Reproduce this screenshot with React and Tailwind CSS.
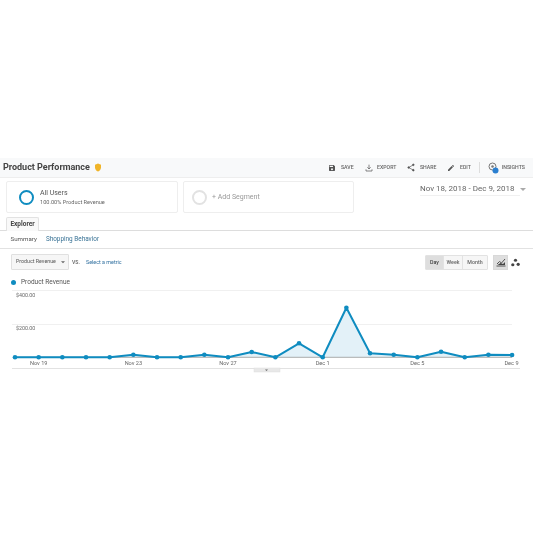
const F = "font-['Roboto',sans-serif]";

function Save() {
  return <svg width="8" height="8" viewBox="0 0 24 24" fill="#555"><path d="M17 3H5a2 2 0 0 0-2 2v14a2 2 0 0 0 2 2h14a2 2 0 0 0 2-2V7l-4-4zm-5 16a3 3 0 1 1 0-6 3 3 0 0 1 0 6zm3-10H5V5h10v4z" /></svg>;
}
function Export() {
  return <svg width="8" height="8" viewBox="0 0 24 24" fill="none" stroke="#666" strokeWidth="2.4"><path d="M12 2v13M7 10l5 5 5-5M3 16v5h18v-5" /></svg>;
}
function Share() {
  return <svg width="8" height="9" viewBox="0 0 24 24" fill="#555" stroke="#555" strokeWidth="2"><circle cx="19" cy="4" r="2.5" /><circle cx="19" cy="20" r="2.5" /><circle cx="5" cy="12" r="2.5" /><path d="M19 4 5 12l14 8" fill="none" /></svg>;
}
function Edit() {
  return <svg width="8" height="8" viewBox="0 0 24 24" fill="#555"><path d="M3 17.25V21h3.75L17.81 9.94l-3.75-3.75L3 17.25zM20.71 7.04a1 1 0 0 0 0-1.41l-2.34-2.34a1 1 0 0 0-1.41 0l-1.83 1.83 3.75 3.75 1.83-1.83z" /></svg>;
}
function Insights() {
  return <svg width="11" height="12" viewBox="0 0 22 24"><circle cx="9" cy="9" r="7" fill="none" stroke="#777" strokeWidth="2" /><circle cx="9" cy="9" r="2.5" fill="#777" /><circle cx="15" cy="17" r="6" fill="#2a7fd0" /></svg>;
}

function Action({ icon, label, className }) {
  return (
    <div className={`flex items-center gap-[4.5px] ${className}`}>
      {icon}
      <span className="text-[5.2px] font-medium text-[#666]">{label}</span>
    </div>
  );
}

const pts = [0,0,0,0,0,2.6,0,0,2.6,0,5.3,0,14,0,49.6,4,2.6,0,5.6,0,2.6,2.3];
const BASE = 68.3;
const coords = pts.map((v, i) => [15 + i * 23.67, BASE - v]);
const line = coords.map((c) => c.join(",")).join(" ");
const area = `15,${BASE} ${line} 512,${BASE}`;
const xLabels = [["Nov 19", 38.7], ["Nov 23", 133.4], ["Nov 27", 228], ["Dec 1", 322.7], ["Dec 5", 417.4], ["Dec 9", 511.5]];

function Chart() {
  return (
    <svg width="535" height="87" viewBox="0 0 535 87" className="block" fontFamily="Roboto, sans-serif">
      <line x1="12" x2="512" y1="1.5" y2="1.5" stroke="#f0f0f0" strokeWidth="1" />
      <line x1="12" x2="512" y1="35.5" y2="35.5" stroke="#f0f0f0" strokeWidth="1" />
      <text x="16" y="8" fontSize="5.3" fill="#666">$400.00</text>
      <text x="16" y="41" fontSize="5.3" fill="#666">$200.00</text>
      <polygon points={area} fill="#e3f1f8" />
      <line x1="15" x2="512" y1={BASE} y2={BASE} stroke="#888" strokeWidth="0.7" />
      <polyline points={line} fill="none" stroke="#0f8cc0" strokeWidth="2" strokeLinejoin="round" />
      {coords.map((c, i) => <circle key={i} cx={c[0]} cy={c[1]} r="2.3" fill="#0f8cc0" />)}
      {xLabels.map(([t, x]) => <text key={t} x={x} y="76" fontSize="5.6" fill="#666" textAnchor="middle">{t}</text>)}
      <line x1="12" x2="520" y1="79.5" y2="79.5" stroke="#e2e2e2" strokeWidth="1" />
      <rect x="254" y="79" width="26" height="4" fill="#e8e8e8" stroke="#ddd" strokeWidth="0.5" />
      <path d="M265 80.5h3l-1.5 1.5z" fill="#666" />
    </svg>
  );
}

export default function App() {
  return (
    <div className={`w-[535px] h-[535px] bg-white pt-[158px] overflow-hidden blur-[0.5px] ${F}`}>
      <div className="w-[533px]">
        {/* title bar */}
        <div className="h-[19px] bg-[#f8f9fa] flex items-center pl-[3px] pr-[8px]">
          <span className="text-[9px] font-bold text-[#444] leading-none">Product Performance</span>
          <svg width="8" height="9" viewBox="0 0 24 26" className="ml-[4px]"><path d="M12 1 3 5v7c0 6 4 11 9 13 5-2 9-7 9-13V5z" fill="#f0b429" /></svg>
          <div className="ml-auto flex items-center">
            <Action icon={<Save />} label="SAVE" />
            <Action icon={<Export />} label="EXPORT" className="ml-[11px]" />
            <Action icon={<Share />} label="SHARE" className="ml-[11px]" />
            <Action icon={<Edit />} label="EDIT" className="ml-[11px]" />
            <div className="w-px h-[11px] bg-[#ddd] mx-[8px]" />
            <div className="flex items-center gap-[3px]">
              <Insights />
              <span className="text-[5.2px] font-medium text-[#666]">INSIGHTS</span>
            </div>
          </div>
        </div>

        {/* segments */}
        <div className="h-[40px] border-t border-[#eee] pt-[3px] pl-[6px] flex items-start">
          <div className="w-[172px] h-[32px] shrink-0 border border-[#eee] rounded-[2px] flex items-center pl-[12px]">
            <div className="w-[15px] h-[15px] rounded-full border-[2.5px] border-[#0f8cc0]" />
            <div className="ml-[6px] flex flex-col">
              <span className="text-[7px] leading-[10px] text-[#555]">All Users</span>
              <span className="text-[5.6px] leading-[8px] text-[#666]">100.00% Product Revenue</span>
            </div>
          </div>
          <div className="ml-[5px] w-[171px] h-[32px] shrink-0 border border-[#eee] rounded-[2px] flex items-center pl-[8px]">
            <div className="w-[15px] h-[15px] rounded-full border-[2px] border-[#e2e2e2]" />
            <span className="ml-[5px] text-[7px] text-[#999]">+ Add Segment</span>
          </div>
          <div className="ml-[66px] mt-[2px] flex items-center shrink-0">
            <span className="text-[8px] leading-[12px] text-[#666] border-b border-[#f0f0f0] pr-[5px] whitespace-nowrap">Nov 18, 2018 - Dec 9, 2018</span>
            <svg width="6" height="4" viewBox="0 0 6 4"><path d="M0 0h6L3 3z" fill="#aaa" /></svg>
          </div>
        </div>

        {/* tab */}
        <div className="h-[14px] pl-[6px] border-b border-[#ddd] flex">
          <div className="w-[33px] h-[14px] bg-[#f9f9f9] border border-b-0 border-[#e2e2e2] rounded-t-[2px] flex items-center justify-center text-[6.5px] font-bold text-[#444]">Explorer</div>
        </div>

        {/* sub nav */}
        <div className="h-[18px] border-b border-[#e2e2e2] flex items-center pl-[10.5px] pt-[1px]">
          <span className="text-[6.2px] text-[#555]">Summary</span>
          <span className="ml-[9px] text-[6.4px] text-[#3a7396]">Shopping Behavior</span>
        </div>

        {/* controls */}
        <div className="h-[21px] flex items-end pl-[11px] pr-[11px]">
          <div className="w-[58px] h-[16px] bg-[#f6f6f6] border border-[#e0e0e0] rounded-[1px] flex items-center pl-[4px] text-[5.3px] text-[#555]">
            <span>Product Revenue</span>
            <svg width="4" height="3" viewBox="0 0 6 4" className="ml-[5px]"><path d="M0 0h6L3 3z" fill="#666" /></svg>
          </div>
          <span className="ml-[3px] mb-[5px] text-[5.2px] text-[#666] font-medium leading-none">VS.</span>
          <span className="ml-[6px] mb-[5px] text-[5.4px] text-[#2f6f9f] leading-none">Select a metric</span>
          <div className="ml-auto flex h-[15px] border border-[#e2e2e2] rounded-[1px] text-[5.3px] font-medium text-[#666]">
            <div className="w-[17px] bg-[#dedede] flex items-center justify-center text-[#444]">Day</div>
            <div className="w-[20px] bg-[#f6f6f6] border-x border-[#e2e2e2] flex items-center justify-center">Week</div>
            <div className="w-[24px] bg-[#f6f6f6] flex items-center justify-center">Month</div>
          </div>
          <div className="ml-[5px] flex h-[15px]">
            <div className="w-[15px] bg-[#dedede] border border-[#d8d8d8] flex items-center justify-center">
              <svg width="10" height="9" viewBox="0 0 20 18" fill="none" stroke="#444" strokeWidth="1.8"><path d="M1 16h18M2 12l5-5 4 3 7-8" /><path d="M3 14l6-4 5 2 4-4v6z" fill="#444" stroke="none" /></svg>
            </div>
            <div className="w-[14px] flex items-center justify-center">
              <svg width="9" height="9" viewBox="0 0 20 20" fill="#444"><circle cx="10" cy="5" r="3.6" /><circle cx="4" cy="15" r="3.6" /><circle cx="16" cy="14" r="3.6" /></svg>
            </div>
          </div>
        </div>

        {/* legend */}
        <div className="h-[19px] flex items-center pl-[11px] pt-[6px]">
          <div className="w-[5px] h-[5px] rounded-full bg-[#0f8cc0]" />
          <span className="ml-[5px] text-[6.5px] text-[#555]">Product Revenue</span>
        </div>
      </div>
      <Chart />
    </div>
  );
}
